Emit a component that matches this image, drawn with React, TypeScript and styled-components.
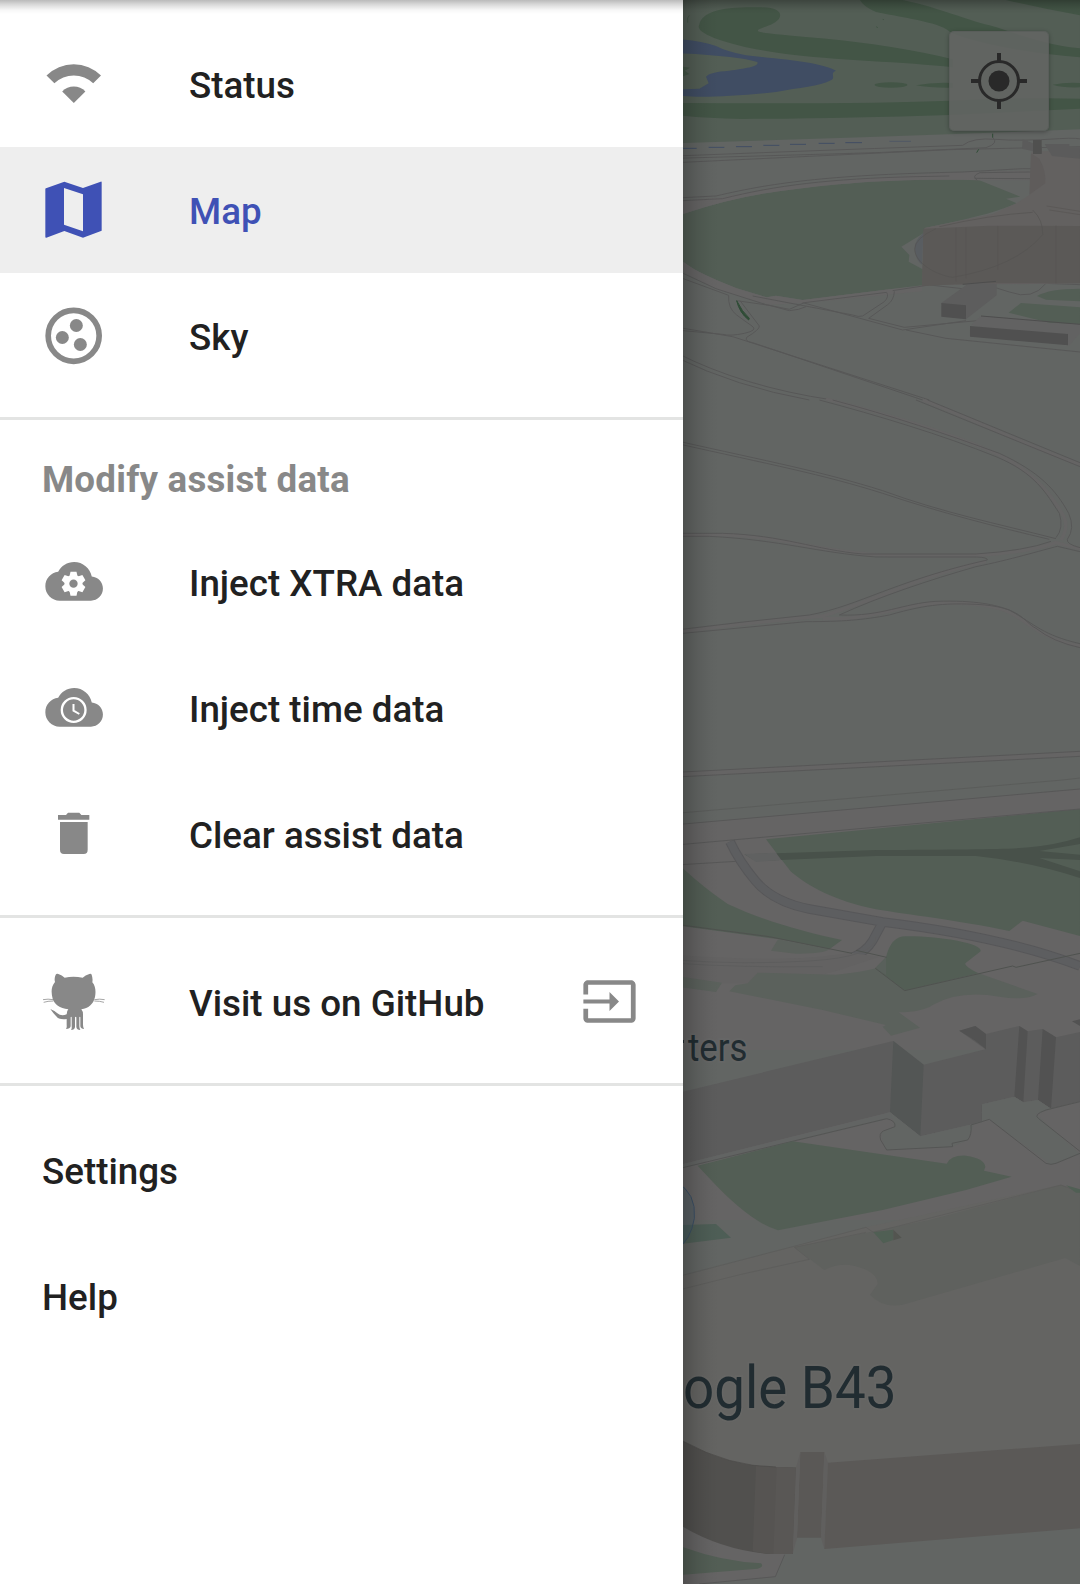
import React from "react";
import styled, { createGlobalStyle } from "styled-components";

const GlobalStyle = createGlobalStyle`
  * { box-sizing: border-box; }
  body { margin: 0; background: #fff; }
`;

const Screen = styled.div`
  position: relative;
  display: flex;
  width: 1080px;
  height: 1584px;
  overflow: hidden;
  background: #fff;
  font-family: Roboto, "Liberation Sans", sans-serif;
`;

const ToolbarShadow = styled.div`
  position: absolute;
  inset: 0 0 auto 0;
  height: 14px;
  background: linear-gradient(rgba(0, 0, 0, 0.27), rgba(0, 0, 0, 0.14) 35%, rgba(0, 0, 0, 0.03) 72%, transparent);
`;

const Drawer = styled.nav`
  flex: none;
  display: flex;
  flex-direction: column;
  width: 683px;
  padding-top: 21px;
  background: #fff;
`;

const Item = styled.a<{ $active?: boolean }>`
  display: flex;
  align-items: center;
  height: 126px;
  padding: 0 42px;
  font-size: 36.75px;
  font-weight: 500;
  line-height: 43px;
  white-space: nowrap;
  color: ${(p) => (p.$active ? "#3f51b5" : "#212121")};
  background: ${(p) => (p.$active ? "#eeeeee" : "transparent")};
`;

const ItemIcon = styled.svg<{ $active?: boolean }>`
  flex: none;
  width: 63px;
  height: 63px;
  margin-right: 84px;
  overflow: visible;
  color: ${(p) => (p.$active ? "#3f51b5" : "#888888")};
  fill: currentColor;
`;

const Label = styled.span`
  flex: 1;
  padding-top: 2px;
`;

const TrailingIcon = styled.svg`
  flex: none;
  width: 57px;
  height: 57px;
  margin: 0 3px 2px 0;
  fill: #888888;
`;

const Subheader = styled.h2`
  height: 78px;
  margin: 0;
  padding: 17px 42px 0;
  font-size: 36.75px;
  font-weight: 700;
  line-height: 43px;
  letter-spacing: 0.2px;
  color: #888888;
`;

const Divider = styled.hr`
  flex: none;
  width: 100%;
  height: 3px;
  margin: 18px 0 21px;
  border: 0;
  background: #e3e4e3;
`;

const MapPane = styled.main`
  position: relative;
  flex: 1;
  min-width: 0;
  background: #626563;
`;

const MapCanvas = styled.svg`
  display: block;
  width: 397px;
  height: 1584px;
`;

const DrawerShadow = styled.div`
  position: absolute;
  inset: 0 auto 0 0;
  width: 36px;
  background: linear-gradient(90deg, rgba(0, 0, 0, 0.21), rgba(0, 0, 0, 0.09) 40%, rgba(0, 0, 0, 0.02) 78%, transparent);
`;

const LocateButton = styled.button`
  position: absolute;
  top: 31px;
  right: 31px;
  display: grid;
  place-items: center;
  width: 100px;
  height: 100px;
  padding: 0;
  border: 1px solid rgba(84, 87, 85, 0.5);
  border-radius: 5px;
  background: rgba(99, 101, 99, 0.87);
  box-shadow: 0 1px 4px rgba(0, 0, 0, 0.3);
`;

const WifiIcon = () => (
  <ItemIcon viewBox="0 0 63 63">
    <path d="M4.5 22.5A38.5 38.5 0 0 1 59 22.5L51.2 30.3A28 28 0 0 0 12.4 30.3Z" />
    <path d="M20.2 38.5A16 16 0 0 1 43.4 38.5L31.8 50Z" />
  </ItemIcon>
);

const MapIcon = () => (
  <ItemIcon viewBox="0 1 189 189" $active>
    <path
      fillRule="evenodd"
      d="M12 29L67 9 123 28 176 9Q179 8 179 11V156L123 177 67 157 13 177Q10 178 10 174V31Q10 30 12 29ZM66 28V138L123 158V47Z"
    />
  </ItemIcon>
);

const SkyIcon = () => (
  <ItemIcon viewBox="0 0 189 189">
    <circle cx="95" cy="92.5" r="76.5" fill="none" stroke="currentColor" strokeWidth="17" />
    <circle cx="103" cy="61.5" r="19.5" />
    <circle cx="61" cy="97.5" r="19.5" />
    <circle cx="115" cy="118.5" r="19.5" />
  </ItemIcon>
);

const cloud =
  "M19.35 6.04C18.67 2.59 15.64 0 12 0 9.11 0 6.6 1.64 5.35 4.04 2.34 4.36 0 6.91 0 10c0 3.31 2.69 6 6 6h13c2.76 0 5-2.24 5-5 0-2.64-2.05-4.78-4.65-4.96z";

const CloudGearIcon = () => (
  <ItemIcon viewBox="0 3 189 189">
    <path transform="translate(10 36) scale(7.2 7.25)" d={cloud} />
    <g transform="translate(94.5 101)" fill="#fff">
      <circle r="27" />
      {[0, 60, 120].map((a) => (
        <path key={a} transform={`rotate(${a})`} d="M-9 -36H9L12 -22V22L9 36H-9L-12 22V-22Z" />
      ))}
      <circle r="12.5" fill="#888" />
    </g>
  </ItemIcon>
);

const CloudClockIcon = () => (
  <ItemIcon viewBox="0 3 189 189">
    <path transform="translate(10 36) scale(7.2 7.25)" d={cloud} />
    <circle cx="95" cy="102" r="35.5" fill="none" stroke="#fff" strokeWidth="7" />
    <path d="M94.5 84V104L112 114" fill="none" stroke="#fff" strokeWidth="6" />
  </ItemIcon>
);

const TrashIcon = () => (
  <ItemIcon viewBox="0 3 189 189">
    <path d="M48 39H72L78 32H112L118 39H142V53H48ZM54 60H137V143Q137 156 125 156H66Q54 156 54 143Z" />
  </ItemIcon>
);

const OctocatIcon = () => (
  <ItemIcon viewBox="0 3 189 189">
    <path d="M41 14Q44 9 49 12Q60 15 68 23Q94 17 122 23Q130 15 142 12Q147 9 149 14Q153 26 151 37C161 48 162 65 159 81C154 103 139 115 118 118Q123 124 123 133V164Q123 171 126 177Q117 177 115 169V142Q113.5 139 112 142V169Q112 176 115 180Q104 180 103 171V142Q101 139 99 142V171Q98 180 87 180Q90 176 89 169V142Q87.5 139 86 142V169Q84 177 72 177Q75 172 74 166V147Q50 150 42 138Q33 129 25 117Q39 122 46 130Q58 140 74 133Q74 123 79 118C53 114 37 103 32 86C27 66 27 51 39 36Q36 25 41 14Z" />
    <path
      d="M34 89Q18 86 3 89M34 93Q17 93 5 97M157 89Q173 86 188 89M157 93Q174 93 186 97"
      fill="none"
      stroke="currentColor"
      strokeWidth="3"
      opacity=".75"
    />
  </ItemIcon>
);

const line = "#575757";
const grass = "#535e55";
const wood = "#435546";
const road = "#656464";

const CampusMap = () => (
  <MapCanvas viewBox="683 0 397 1584">
    <g transform="translate(676 0) scale(.33333)" strokeWidth="3" fill="none">
      <path d="M0 0H1212V388L900 400 560 412 300 420 0 430Z" fill={grass} />
      <path d="M72 66C90 30 150 20 250 22C310 22 320 40 308 58C290 80 240 84 246 94C260 104 480 112 650 142Q760 160 830 178V202C700 186 460 180 330 162C200 145 70 110 68 80Z" fill={wood} />
      <path d="M552 0H680C800 26 870 60 940 76C1000 92 1080 130 1212 145V172C1060 160 900 130 822 96C800 70 700 56 600 36Q562 20 552 0Z" fill={wood} />
      <path d="M990 0H1212V46Q1100 26 990 0Z" fill={wood} />
      <path d="M0 309Q600 312 820 302T1212 296V326L820 345C600 352 400 356 200 357Q80 355 0 345Z" fill={wood} />
      <ellipse cx="645" cy="255" rx="49" ry="8" fill={wood} />
      <path d="M720 256Q770 246 830 249V263Q760 264 720 256ZM1130 254Q1170 246 1212 249V262Q1160 264 1130 254Z" fill={wood} />
      <path d="M0 117Q70 122 120 138Q150 154 210 166C330 178 440 188 480 212C460 220 480 232 466 240C430 260 370 262 300 276C220 286 100 292 60 290L0 287V268L70 266L98 250 90 230Q100 216 160 212C210 204 250 200 244 186C200 172 130 168 60 162L0 160Z" fill="#404d63" />
      <path d="M0 198L42 203 26 212 40 222 0 236Z" fill={wood} />
      <path d="M35 68V54L40 46M600 80L606 83M620 58L624 59" stroke={wood} />
      <path d="M0 445H62M98 442H145M180 440H228M262 436H310M342 433H390M428 430H476M508 428H558" stroke="#404d63" />
      <path d="M640 424H705" stroke="#505864" />

      <path d="M0 650L20 642Q160 596 280 578C460 552 650 534 910 541L1033 590 990 596 1022 610C950 642 860 660 746 684L742 700 676 740 700 765 698 785 790 835 738 856 640 868 380 900 300 887 272 892 182 865C110 835 60 815 20 785L0 770Z" fill={grass} />
      <path d="M0 650L20 642Q160 596 280 578C460 552 650 534 910 541L1212 541V508L860 516C600 530 300 555 140 592L0 603Z" fill={road} />
      <path d="M22 785C60 815 110 835 182 865L272 892 300 887 380 900 640 868 738 858V874L385 909 280 914 120 868 22 816Z" fill={road} />
      <g stroke={line}>
        <path d="M0 468Q300 456 860 436Q890 412 960 418T1150 416 1212 450M0 475L600 458 930 443Q970 430 950 412M0 488L820 449 1212 440" />
        <path d="M0 594L120 588C300 545 480 524 860 516L1040 506 1212 508M0 603L140 596C300 556 460 536 720 530L820 528M904 541Q884 528 912 518L1212 514M896 535L1212 537" />
        <path d="M0 810L120 866 270 914 340 928 385 908 632 877Q640 890 625 905L560 948Q548 952 530 945L230 888M0 828L158 886Q155 925 182 945T228 978 205 1000 140 1003L0 990M22 985L170 1010 760 1200M182 902L280 916 340 932Q370 930 390 920M192 902L250 978Q252 988 212 1012 205 1024 230 1028L740 1200M380 908L680 990 870 962M655 874Q654 900 635 914L578 955 685 982 905 962M690 990L810 1015 1212 1056M650 872L760 855 860 866M840 852Q930 850 1000 876T1110 850L1212 854" />
        <path d="M0 1058Q200 1160 470 1200M0 1072Q180 1160 400 1200" />
      </g>
      <path d="M182 902Q198 935 220 955L218 960Q190 938 182 902ZM950 401V413M908 448L902 458" fill="#2f4c36" stroke="#2f4c36" />

      <path d="M1065 455L1110 540 1060 585 1022 610 950 642 746 684 738 856 1212 850V450Z" fill="#636160" />
      <path d="M1065 460L1090 476Q1110 510 1108 550L1060 584Z" fill="#5f5c5b" />
      <path d="M742 686L940 677 1212 678V850H910L738 858Z" fill="#5b5957" />
      <path d="M742 700Q715 722 716 745 718 780 738 794Z" fill="#595d61" />
      <path d="M780 686Q716 715 716 748C718 790 780 825 830 832Q1020 800 1100 704 1102 660 1070 630M790 680Q940 645 1070 637" stroke="#555351" strokeWidth="2" />
      <path d="M840 684V844M870 682V835M965 678V810M1140 677V850M1112 618L1212 634M1120 630L1212 644" stroke="#575553" strokeWidth="2" />
      <path d="M1040 418L1098 440V460L1038 446ZM1106 432H1180V442H1212V476L1128 468Z" fill="#5b5b5b" />
      <path d="M1071 420H1097V462H1071Z" fill="#50504f" />
      <path d="M796 909L880 848 962 852V886L870 958Z" fill="#5d5d5d" />
      <path d="M796 909L870 916V958L796 950Z" fill="#505050" />
      <path d="M885 975L915 948 1212 970V1000L1180 1036Z" fill="#626262" />
      <path d="M882 978L1176 1002V1036L882 1010Z" fill="#505050" />
      <path d="M1083 888Q1120 866 1212 866V904L1110 899ZM998 938L1035 909 1212 922V972L1120 968Z" fill={grass} />
      <path d="M915 948L1212 973M860 853L960 844" stroke="#4d4d4d" />
    </g>

    <g transform="translate(676 400) scale(.33333)" stroke={line} strokeWidth="3" fill="none">
      <path d="M450 -3C700 60 880 120 990 175C1090 230 1135 300 1164 350Q1178 385 1155 420M740 0C900 60 1080 150 1212 193M0 404H140C340 410 460 468 710 468H870Q1050 460 1140 428L1212 446M930 484C740 525 600 600 440 648Q200 670 0 697M440 656H500C620 650 700 608 800 609C960 608 1000 630 1060 675Q1130 725 1212 738" stroke={road} strokeWidth="10" />
      <path d="M430 0C600 45 800 105 960 170C1080 220 1110 280 1150 340Q1164 385 1140 413M470 0C640 45 820 105 970 160C1090 215 1140 270 1178 340Q1198 385 1174 418 1170 432 1212 443" />
      <path d="M720 0L1212 200M755 0L1212 188M0 122C280 185 440 215 620 272C800 338 960 370 1140 416M0 130C280 193 440 223 620 280C800 340 960 380 1120 418" />
      <path d="M0 400H140C320 405 420 450 560 462H900Q1050 452 1125 424M0 409H100C320 420 420 458 600 471H900Q936 472 934 480C800 510 700 545 620 575C540 605 480 630 400 645Q200 665 0 690M1212 455L1144 439C1100 450 1000 480 900 500C760 540 610 590 490 645C620 650 680 610 780 604C900 600 960 615 1000 630C1080 675 1100 705 1212 731M0 702L390 665C500 665 560 660 640 645C760 610 820 610 900 613C1040 620 1040 665 1080 685Q1130 725 1212 743" />
      <path d="M0 1124L1212 1061" stroke={road} strokeWidth="14" />
      <path d="M0 1117L1212 1054M0 1131L1212 1069" />
    </g>

    <g transform="translate(676 780) scale(.33333)" strokeWidth="3" fill="none">
      <path d="M0 134L1212 27V810H0Z" fill={road} />
      <path d="M270 178L1212 87V468L1040 422 1000 453C840 420 700 405 600 388C470 360 400 320 345 275Q305 225 270 178ZM0 252L22 266Q80 320 155 372C270 425 380 455 498 480L460 508 310 478 0 436Z" fill={grass} />
      <path d="M205 223L600 210C880 208 1000 208 1060 202Q1140 195 1212 172V192L1090 213 1212 224V240L1090 234 1212 274V294Q1060 245 900 228L600 228 240 243Z" fill="#48514a" />
      <path d="M205 222L300 218 316 240 240 246Z" fill="#606161" />
      <path d="M162 185Q190 245 238 302Q290 365 400 387L620 426Q980 470 1212 558M620 426L590 482Q550 550 410 553L180 558 0 548" stroke="#575759" strokeWidth="29" />
      <path d="M162 185Q190 245 238 302Q290 365 400 387L620 426Q980 470 1212 558M620 426L590 482Q550 550 410 553L180 558 0 548" stroke="#5d5e60" strokeWidth="23" />
      <path d="M0 525Q350 550 520 518L610 530 490 570 350 610H0Z" fill="#636262" />
      <path d="M0 540Q200 555 400 543T600 470M0 550Q200 563 440 560" stroke="#5d5d5d" />
      <path d="M0 134L1212 27M0 195L1212 87M0 255L180 244" stroke={line} />
      <path d="M0 100L1160 0 1212 -6" stroke="#5a5c5a" />
      <path d="M630 532Q645 468 690 469C790 468 920 490 914 514L868 550Q866 560 908 580L686 632 598 565Z" fill={grass} />
      <path d="M598 565L630 532V585Z" fill="#59605b" />
      <path d="M0 588L138 608 120 636 0 620ZM306 478L460 508Q440 522 360 521L285 512ZM215 610L245 578 480 584Q560 576 600 565L686 632 908 580 1085 642Q1050 662 970 650 850 630 770 675 740 696 668 697L732 743 645 767 620 740 630 735 440 690 160 634 178 616Z" fill="#5b615c" />
      <path d="M0 433L280 470 528 520M540 511L632 532M598 565L686 632 1010 558 1020 562 1212 520" stroke="#4f524f" />

      <path d="M0 940L652 783 743 854 928 808 850 752 898 738 930 762 1030 738 1055 754 1100 747 1140 772 1212 756V1200H0Z" fill="#5c5c5c" />
      <path d="M850 752L898 738V782ZM1030 738L1055 754 1042 967 1015 950ZM1100 747L1140 772 1125 986 1086 960ZM898 738L930 762V808L895 780Z" fill="#525252" />
      <path d="M652 783L743 854 733 1069 642 997Z" fill="#535655" />
      <path d="M1188 724L1212 718V738Z" fill="#525252" />
      <path d="M0 1157L642 997 733 1069 918 1026V973L1015 950 1042 967 1086 960 1125 986 1212 964V1320H0Z" fill={road} />
      <path d="M0 1157L642 997 660 1015 632 1018 362 1082 0 1168Z" fill="#626463" />
      <path d="M918 973L1015 950 1042 967 1086 960 1125 986 1080 1003 1212 1122 1125 1154 940 1018 895 1030 875 1080 830 1100 632 1110Q610 1065 620 1055L655 1040 652 1022 642 997 733 1069 918 1026Z" fill="#626563" />
      <path d="M0 1168L632 1016Q660 1022 657 1040L622 1053Q608 1060 614 1080L632 1110 830 1100 828 1090 875 1080Q888 1065 885 1035L940 1018 1110 1150Q1125 1156 1140 1150L1212 1120M1212 1114L1088 1016Q1070 1004 1110 990L1212 965" stroke="#545554" />

      <path d="M65 1157L350 1084 812 1151Q825 1125 870 1127 925 1135 928 1160L924 1172 1007 1190 870 1230 620 1290 306 1351Q220 1325 100 1195Z" fill={grass} />
    </g>

    <g transform="translate(676 1160) scale(.33333)" strokeWidth="3" fill="none">
      <path d="M0 196L120 192 165 233 0 254Z" fill="#4e5e56" />
      <path d="M0 65Q62 100 55 175 45 240 0 270Z" fill="#3e5968" fillOpacity=".3" stroke="#3b4f64" />
      <path d="M0 353L350 260 570 202 1155 75 1212 96V1080H0Z" fill="#646462" />
      <path d="M355 262L760 180 1155 75 1212 96V318L1168 294 680 434Q620 445 582 404L605 372Q605 330 520 315 480 312 445 330Z" fill="#5f615e" />
      <path d="M0 351L350 260 570 202 592 217 1155 75 1212 96M355 262L570 217M0 392L200 342 400 298 355 262" stroke="#5b5b59" strokeWidth="2" />
      <path d="M592 217L652 209V240L622 250ZM1170 76L1212 88V98H1200Z" fill="#505f54" />
      <path d="M652 209L677 233 652 241Z" fill="#535550" />
      <path d="M445 1080H1212V1272H0V1180Z" fill="#626563" />
      <path d="M0 1080L350 1140 326 1184 298 1250 70 1272H0Z" fill={road} />
      <path d="M0 1156L22 1162Q140 1205 255 1210 265 1220 245 1226L0 1246Z" fill={grass} />
      <path d="M326 1184L298 1250 70 1272" stroke={line} />
      <path d="M0 830L22 844Q160 920 300 921L360 923 350 1182H280Q140 1170 22 1101L0 1090Z" fill="#51504e" />
      <path d="M240 917L300 921 360 923 350 1182H280L230 1174Z" fill="#565452" />
      <path d="M302 921L360 923 350 1182H292Z" fill="#595755" />
      <path d="M373 876H445L435 1133H363Z" fill="#5a5856" />
      <path d="M360 923L373 876 363 1133 350 1182ZM445 876L456 908 445 1167 435 1133Z" fill="#605f5e" />
      <path d="M456 908L1212 852V1105L445 1167Z" fill="#5b5957" />
      <path d="M22 844Q160 920 300 921" stroke="#4b4a48" strokeWidth="2" />
    </g>

    <g fill="#212c31" stroke="#696969" strokeOpacity=".45" strokeWidth="4" paintOrder="stroke" fontFamily="Roboto, sans-serif">
      <rect x="682" y="1040" width="2" height="3" stroke="none" />
      <text x="688" y="1061" fontSize="39" textLength="59.5" lengthAdjust="spacingAndGlyphs">ters</text>
      <text x="683" y="1408" fontSize="59.5" textLength="213.5" lengthAdjust="spacingAndGlyphs">ogle B43</text>
    </g>
  </MapCanvas>
);

export default function App() {
  return (
    <>
      <GlobalStyle />
      <Screen>
        <Drawer>
          <Item><WifiIcon /><Label>Status</Label></Item>
          <Item $active><MapIcon /><Label>Map</Label></Item>
          <Item><SkyIcon /><Label>Sky</Label></Item>
          <Divider />
          <Subheader>Modify assist data</Subheader>
          <Item><CloudGearIcon /><Label>Inject XTRA data</Label></Item>
          <Item><CloudClockIcon /><Label>Inject time data</Label></Item>
          <Item><TrashIcon /><Label>Clear assist data</Label></Item>
          <Divider />
          <Item>
            <OctocatIcon />
            <Label>Visit us on GitHub</Label>
            <TrailingIcon viewBox="0 0 24 24">
              <path d="M21 3.01H3c-1.1 0-2 .9-2 2V9h2V4.99h18v14.03H3V15H1v4.01c0 1.1.9 1.98 2 1.98h18c1.1 0 2-.88 2-1.98v-14c0-1.11-.9-2-2-2zM12 16l4-4-4-4v3.2H1v1.6h11z" />
            </TrailingIcon>
          </Item>
          <Divider />
          <Item><Label>Settings</Label></Item>
          <Item><Label>Help</Label></Item>
        </Drawer>
        <MapPane>
          <CampusMap />
          <LocateButton aria-label="My location">
            <svg width="56" height="56" viewBox="0 0 56 56" fill="none" stroke="#292929">
              <circle cx="28" cy="28" r="19.5" strokeWidth="3" />
              <circle cx="28" cy="28" r="10.5" fill="#292929" stroke="none" />
              <path d="M28 0V8M28 48V56M0 28H8M48 28H56" strokeWidth="4" />
            </svg>
          </LocateButton>
          <DrawerShadow />
        </MapPane>
        <ToolbarShadow />
      </Screen>
    </>
  );
}
